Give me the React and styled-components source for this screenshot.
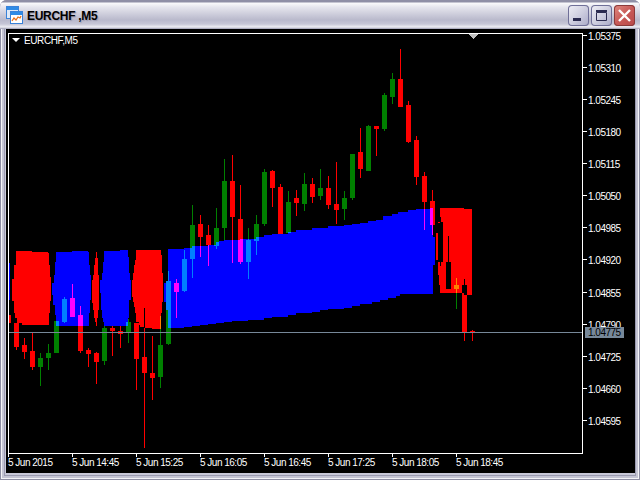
import styled, { createGlobalStyle } from "styled-components";

const GlobalStyle = createGlobalStyle`
html, body {
  margin: 0;
  background: #fff;
}
`;

// [x, wickTop, wickBottom, bodyTop, bodyBottom, colour]
const candles = [
  [8, 315, 323, 315, 323, "r"],
  [16, 323, 350, 323, 347, "r"],
  [24, 338, 359, 345, 352, "r"],
  [32, 333, 370, 351, 367, "r"],
  [40, 353, 386, 358, 367, "g"],
  [48, 344, 370, 353, 358, "g"],
  [56, 321, 353, 321, 353, "g"],
  [64, 297, 323, 299, 322, "g"],
  [72, 284, 317, 298, 317, "r"],
  [80, 306, 353, 315, 351, "r"],
  [88, 348, 367, 350, 354, "r"],
  [96, 352, 384, 353, 362, "r"],
  [104, 326, 365, 328, 361, "g"],
  [112, 326, 356, 328, 331, "r"],
  [120, 326, 348, 331, 334, "r"],
  [128, 319, 343, 322, 332, "g"],
  [136, 323, 390, 323, 359, "r"],
  [144, 308, 448, 357, 373, "r"],
  [152, 336, 400, 373, 378, "r"],
  [160, 316, 388, 345, 377, "g"],
  [168, 271, 345, 281, 344, "g"],
  [176, 279, 318, 283, 292, "r"],
  [184, 250, 292, 259, 291, "g"],
  [192, 205, 278, 225, 259, "g"],
  [200, 215, 257, 224, 237, "r"],
  [208, 225, 266, 235, 245, "r"],
  [216, 208, 249, 228, 246, "g"],
  [224, 159, 240, 181, 228, "g"],
  [232, 155, 263, 181, 217, "r"],
  [240, 185, 264, 219, 262, "r"],
  [248, 228, 279, 240, 262, "g"],
  [256, 215, 255, 224, 241, "g"],
  [264, 169, 226, 172, 224, "g"],
  [272, 170, 207, 171, 188, "r"],
  [280, 184, 234, 187, 234, "r"],
  [288, 191, 233, 202, 233, "g"],
  [296, 190, 216, 198, 203, "r"],
  [304, 173, 211, 184, 204, "g"],
  [312, 178, 203, 184, 197, "r"],
  [320, 169, 200, 188, 196, "g"],
  [328, 176, 209, 188, 205, "r"],
  [336, 162, 224, 204, 210, "r"],
  [344, 191, 220, 198, 209, "g"],
  [352, 154, 200, 154, 198, "g"],
  [360, 128, 178, 152, 169, "r"],
  [368, 125, 171, 126, 171, "g"],
  [376, 126, 156, 126, 129, "r"],
  [384, 93, 131, 95, 129, "g"],
  [392, 73, 104, 79, 97, "g"],
  [400, 49, 107, 79, 107, "r"],
  [408, 101, 143, 105, 142, "r"],
  [416, 136, 185, 140, 177, "r"],
  [424, 172, 230, 176, 202, "r"],
  [432, 190, 235, 201, 225, "r"],
  [440, 217, 266, 222, 262, "r"],
  [448, 236, 289, 262, 289, "r"],
  [456, 278, 309, 285, 289, "g"],
  [464, 279, 341, 285, 332, "r"],
  [472, 330, 341, 331, 333, "r"],
];

// the band indicator is xor-drawn, so candles change colour where they cross it
const palette = {
  plain: { r: "#ff0000", g: "#008000" },
  blue: { r: "#ff00ff", g: "#0080ff" },
  red: { r: "#000000", g: "#ff8000" },
};

// [y, left, right] rows, each one runs down to the next row
const rowsPath = (rows, end) =>
  rows
    .map(([y, l, r], i) => {
      const next = i + 1 < rows.length ? rows[i + 1][0] : end;
      return `M${l} ${y}H${r}V${next}H${l}Z`;
    })
    .join("");

const topSteps = [
  [168, 249], [184, 248], [192, 246], [208, 245], [216, 242], [219, 241], [224, 240],
  [240, 239], [256, 237], [264, 235], [272, 234], [288, 232], [296, 230], [312, 228],
  [328, 226], [344, 225], [352, 224], [360, 223], [368, 221], [376, 220], [383, 216],
  [392, 214], [398, 212], [408, 210], [416, 209], [430, 208],
];

const bottomSteps = [
  [416, 294], [400, 296], [396, 298], [388, 300], [380, 302], [372, 304], [360, 306],
  [352, 308], [344, 309], [328, 310], [320, 312], [312, 313], [296, 315], [288, 317],
  [272, 318], [264, 320], [248, 321], [232, 322], [224, 323], [216, 324], [208, 325],
  [200, 326], [192, 327], [184, 328], [168, 329],
];

const mainBlue =
  "M168 249" +
  topSteps.map(([x, y]) => `H${x}V${y}`).join("") +
  "H433V237H435V265H433V294" +
  bottomSteps.map(([x, y]) => `H${x}V${y}`).join("") +
  "V310H166V302H164V283H166V281H168Z";

const bluePath =
  rowsPath([[263, 9, 10]], 300) +
  rowsPath(
    [
      [251, 72, 88], [252, 56, 89], [262, 55, 89], [265, 55, 90], [275, 54, 91],
      [283, 52, 91], [295, 53, 91], [300, 53, 90], [305, 55, 90], [313, 55, 89], [315, 56, 89],
    ],
    326
  ) +
  rowsPath(
    [
      [250, 120, 128], [251, 104, 128], [257, 104, 129], [262, 103, 129], [273, 102, 130],
      [280, 100, 131], [293, 101, 131], [300, 101, 129], [310, 102, 129], [318, 103, 128], [322, 104, 128],
    ],
    326
  ) +
  mainBlue;

const redPath =
  rowsPath(
    [
      [251, 16, 32], [252, 16, 48], [253, 16, 49], [265, 14, 50], [277, 14, 51], [279, 12, 51],
      [301, 14, 50], [313, 15, 49], [318, 17, 49], [323, 22, 49],
    ],
    325
  ) +
  rowsPath(
    [
      [252, 96, 97], [258, 95, 98], [265, 94, 98], [275, 93, 99], [280, 92, 99],
      [303, 93, 99], [310, 94, 98], [318, 95, 97], [322, 96, 97],
    ],
    326
  ) +
  rowsPath(
    [
      [250, 136, 161], [255, 136, 162], [260, 135, 162], [265, 134, 162], [273, 133, 163],
      [280, 132, 163], [297, 133, 163], [302, 134, 162], [307, 135, 162], [313, 136, 161],
      [322, 139, 161], [325, 140, 161], [327, 144, 161], [328, 152, 161],
    ],
    329
  ) +
  rowsPath(
    [
      [208, 440, 464], [209, 440, 472], [223, 438, 472], [233, 436, 472],
      [260, 438, 472], [275, 439, 472], [285, 440, 472], [293, 464, 472],
    ],
    295
  );

const prices = [
  "1.05375", "1.05310", "1.05245", "1.05180", "1.05115", "1.05050", "1.04985",
  "1.04920", "1.04855", "1.04790", "1.04725", "1.04660", "1.04595",
];

const times = [
  "5 Jun 2015", "5 Jun 14:45", "5 Jun 15:25", "5 Jun 16:05",
  "5 Jun 16:45", "5 Jun 17:25", "5 Jun 18:05", "5 Jun 18:45",
];

const CandleSet = ({ colors }) => (
  <g>
    {candles.map(([x, wt, wb, bt, bb, c]) => (
      <g key={x} fill={colors[c]}>
        <rect x={x} y={wt} width="1" height={wb - wt} />
        <rect x={x - 2} y={bt} width="5" height={bb - bt} />
      </g>
    ))}
  </g>
);

const WindowIcon = () => (
  <svg width="17" height="18" viewBox="0 0 17 18">
    <rect x="0.5" y="0.5" width="12" height="12" fill="#dfe9f7" stroke="#3a82d8" />
    <rect x="1" y="1" width="11" height="3" fill="#2f8be6" />
    <rect x="4.5" y="5.5" width="12" height="12" fill="#fff" stroke="#3a82d8" />
    <rect x="5" y="6" width="11" height="3" fill="#2f8be6" />
    <path d="M6 15l2-3 2 2 2-3 2 1 1-2" fill="none" stroke="#e8701a" strokeWidth="1.3" />
  </svg>
);

export default function App() {
  return (
    <>
      <GlobalStyle />
      <Window>
        <TitleBar>
          <WindowIcon />
          <Title>EURCHF ,M5</Title>
          <Buttons>
            <CaptionButton>
              <svg width="21" height="21" viewBox="0 0 21 21">
                <rect x="5" y="13" width="8" height="3" fill="#2b2b50" />
              </svg>
            </CaptionButton>
            <CaptionButton>
              <svg width="21" height="21" viewBox="0 0 21 21">
                <path d="M5.5 7.5h10v8h-10z" fill="none" stroke="#2b2b50" />
                <rect x="5" y="5" width="11" height="2" fill="#2b2b50" />
              </svg>
            </CaptionButton>
            <CaptionButton $close>
              <svg width="21" height="21" viewBox="0 0 21 21">
                <path d="M5 5l11 11M16 5L5 16" stroke="#fff" strokeWidth="2.4" />
              </svg>
            </CaptionButton>
          </Buttons>
        </TitleBar>
        <ChartFrame>
          <Plot>
            <svg width="573" height="419" viewBox="9 34 573 419" shapeRendering="crispEdges" style={{ display: "block" }}>
              <defs>
                <clipPath id="blueBand">
                  <path d={bluePath} />
                </clipPath>
                <clipPath id="redBand">
                  <path d={redPath} />
                </clipPath>
              </defs>
              <CandleSet colors={palette.plain} />
              <path d={bluePath} fill="#0000ff" />
              <path d={redPath} fill="#ff0000" />
              <g clipPath="url(#blueBand)">
                <CandleSet colors={palette.blue} />
              </g>
              <g clipPath="url(#redBand)">
                <CandleSet colors={palette.red} />
              </g>
              <rect x="9" y="332" width="573" height="1" fill="#778899" />
              <path d="M468 34h10l-5 5z" fill="#c0c0c0" />
            </svg>
            <Legend>
              <LegendArrow />
              EURCHF,M5
            </Legend>
          </Plot>
          <PriceAxis>
            {prices.map((p) => (
              <PriceRow key={p}>
                <PriceTick />
                {p}
              </PriceRow>
            ))}
            <PriceTag>1.04775</PriceTag>
          </PriceAxis>
          <TimeAxis>
            {times.map((t) => (
              <TimeCell key={t}>
                <TimeTick />
                {t}
              </TimeCell>
            ))}
          </TimeAxis>
        </ChartFrame>
      </Window>
    </>
  );
}

const Window = styled.div`
width: 640px;
height: 480px;
box-sizing: border-box;
display: flex;
flex-direction: column;
padding: 0 5px 7px 6px;
border-radius: 7px 7px 0 0;
overflow: hidden;
background: #c8c8d8;
box-shadow: inset 0 0 0 1px #8d8da3, inset 0 0 0 2px #f4f4f8, inset 0 0 0 4px #c4c4d4, inset 0 0 0 5px #9a9ab0;
`;

const TitleBar = styled.div`
height: 29px;
flex: none;
display: flex;
align-items: center;
margin: 0 -5px 0 -6px;
padding: 0 5px 0 6px;
box-sizing: border-box;
background: linear-gradient(#8f8fa6 0, #8f8fa6 2px, #fafafc 3px, #e6e6ee 7px, #b9b9cc 20px, #c6c6d6 24px, #eeeef4 27px, #9a9ab0 29px);
`;

const Title = styled.div`
margin: 2px 0 0 4px;
font: bold 12px "Liberation Sans", sans-serif;
letter-spacing: -0.3px;
color: #000;
text-shadow: 1px 1px 1px #9a9ab0;
`;

const Buttons = styled.div`
margin-left: auto;
display: flex;
gap: 2px;
margin-top: 1px;
`;

const CaptionButton = styled.div`
width: 21px;
height: 21px;
border-radius: 4px;
box-shadow: inset 0 0 0 1px ${(p) => (p.$close ? "#8a3a3a" : "#6f6f98")};
background: ${(p) =>
  p.$close
    ? "linear-gradient(135deg, #e08a80, #c85a58 50%, #b84848)"
    : "linear-gradient(135deg, #f0f0f6, #cfcfe0 50%, #a8a8c6)"};
svg {
  display: block;
}
`;

const ChartFrame = styled.div`
flex: 1;
background: #000;
display: grid;
grid-template-columns: 575px 1fr;
grid-template-rows: 425px 1fr;
padding-left: 2px;
position: relative;
`;

const Plot = styled.div`
position: relative;
margin-top: 4px;
border: 1px solid #fff;
height: 419px;
`;

const Legend = styled.div`
position: absolute;
left: 15px;
top: 1px;
display: flex;
align-items: center;
font: 10px/11px "Liberation Sans", sans-serif;
letter-spacing: -0.4px;
color: #fff;
`;

const LegendArrow = styled.span`
position: absolute;
left: -12px;
top: 3px;
width: 0;
height: 0;
border: 4px solid transparent;
border-top-color: #fff;
border-bottom: 0;
`;

const PriceAxis = styled.div`
position: relative;
padding-top: 1.5px;
`;

const PriceRow = styled.div`
height: 32.13px;
display: flex;
align-items: flex-start;
font: 10px/11px "Liberation Sans", sans-serif;
letter-spacing: -0.5px;
color: #fff;
`;

const PriceTick = styled.span`
width: 4px;
height: 1px;
margin: 4px 1px 0 0;
background: #fff;
`;

const PriceTag = styled.div`
position: absolute;
left: 2px;
top: 298px;
width: 39px;
height: 11px;
box-sizing: border-box;
padding-left: 3px;
background: #778899;
color: #000;
font: 10px/11px "Liberation Sans", sans-serif;
letter-spacing: -0.5px;
`;

const TimeAxis = styled.div`
grid-column: 1 / 3;
display: flex;
`;

const TimeCell = styled.div`
width: 64px;
flex: none;
display: flex;
flex-direction: column;
font: 10px/9px "Liberation Sans", sans-serif;
letter-spacing: -0.5px;
color: #fff;
white-space: nowrap;
`;

const TimeTick = styled.span`
width: 1px;
height: 3px;
margin-bottom: 1px;
background: #fff;
`;
